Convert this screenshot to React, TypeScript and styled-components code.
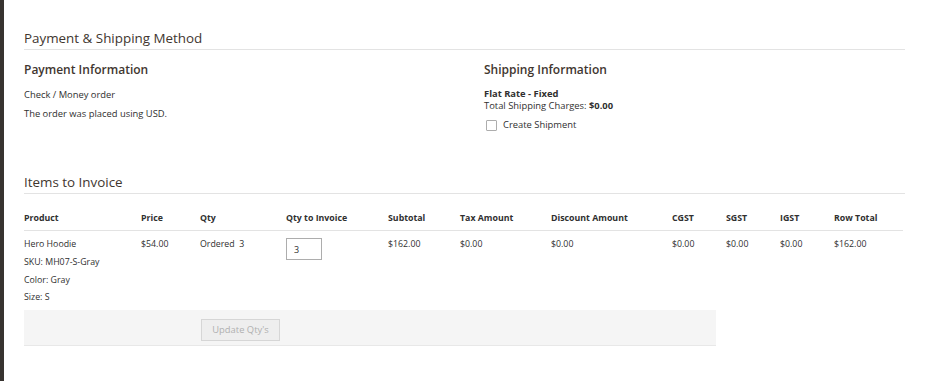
import { createGlobalStyle, styled } from "styled-components";

const GlobalStyle = createGlobalStyle`
  html, body {
    margin: 0;
    padding: 0;
    background: #ffffff;
  }
  body {
    font-family: "Open Sans", "Liberation Sans", sans-serif;
    color: #303030;
  }
`;

const Page = styled.div`
  display: flex;
  width: 925px;
  height: 381px;
  overflow: hidden;
  background: #ffffff;
`;

const SideEdge = styled.div`
  width: 4px;
  flex-shrink: 0;
  background: #373330;
`;

const Main = styled.main`
  flex: 1;
  padding: 30px 20px 0 20px;
`;

const SectionTitle = styled.h2<{ $top?: number }>`
  margin: ${(p) => p.$top ?? 0}px 0 0 0;
  padding-bottom: 2px;
  border-bottom: 1px solid #e3e3e3;
  font-size: 13.4px;
  line-height: 17px;
  font-weight: 400;
  color: #41362f;
`;

const Columns = styled.div`
  display: grid;
  grid-template-columns: 460px 1fr;
  margin-top: 12px;
`;

const Column = styled.div``;

const BlockTitle = styled.h3<{ $gap?: number }>`
  margin: 0 0 ${(p) => p.$gap ?? 8}px 0;
  font-size: 12px;
  line-height: 15px;
  font-weight: 600;
  color: #41362f;
`;

const InfoLine = styled.div<{ $lh?: number }>`
  font-size: 9.4px;
  line-height: ${(p) => p.$lh ?? 19}px;
  strong {
    font-weight: 700;
  }
`;

const CheckRow = styled.label`
  display: flex;
  align-items: center;
  gap: 6px;
  margin-top: 7px;
  margin-left: 2px;
  font-size: 9.4px;
  line-height: 12px;
`;

const CheckBox = styled.span`
  width: 9px;
  height: 9px;
  border: 1px solid #adadad;
  border-radius: 1px;
  background: #fff;
`;

const Table = styled.table`
  width: 879px;
  table-layout: fixed;
  border-collapse: collapse;
  font-size: 8.8px;
`;

const Th = styled.th`
  text-align: left;
  font-weight: 700;
  line-height: 12px;
  padding: 18px 0 6px 0;
  border-bottom: 1px solid #e3e3e3;
  color: #303030;
`;

const Td = styled.td`
  vertical-align: top;
  padding: 4px 0 0 0;
  line-height: 18px;
`;

const ProductLine = styled.div<{ $lh?: number }>`
  line-height: ${(p) => p.$lh ?? 18}px;
`;

const QtyInput = styled.input`
  box-sizing: border-box;
  width: 36px;
  height: 22px;
  margin-top: 3px;
  padding: 0 7px;
  border: 1px solid #adadad;
  font-family: "Open Sans", "Liberation Sans", sans-serif;
  font-size: 9px;
  color: #303030;
  outline: none;
`;

const Footer = styled.div`
  box-sizing: border-box;
  width: 692px;
  height: 36px;
  margin-top: 5px;
  padding: 6px 0 0 177px;
  background: #f5f5f5;
  border-bottom: 1px solid #e8e8e8;
`;

const UpdateButton = styled.button`
  box-sizing: border-box;
  height: 22px;
  width: 79px;
  padding: 0;
  border: 1px solid #d6d6d6;
  background: #eeeeee;
  color: #b0b0b0;
  font-family: "Open Sans", "Liberation Sans", sans-serif;
  font-size: 9.4px;
  cursor: not-allowed;
`;

const columns = [
  { label: "Product", width: 117 },
  { label: "Price", width: 59 },
  { label: "Qty", width: 86 },
  { label: "Qty to Invoice", width: 102 },
  { label: "Subtotal", width: 72 },
  { label: "Tax Amount", width: 91 },
  { label: "Discount Amount", width: 121 },
  { label: "CGST", width: 54 },
  { label: "SGST", width: 54 },
  { label: "IGST", width: 54 },
  { label: "Row Total", width: 69 },
];

export default function App() {
  return (
    <>
      <GlobalStyle />
      <Page>
        <SideEdge />
        <Main>
          <SectionTitle>Payment &amp; Shipping Method</SectionTitle>
          <Columns>
            <Column>
              <BlockTitle>Payment Information</BlockTitle>
              <InfoLine>Check / Money order</InfoLine>
              <InfoLine>The order was placed using USD.</InfoLine>
            </Column>
            <Column>
              <BlockTitle $gap={11}>Shipping Information</BlockTitle>
              <InfoLine $lh={12}>
                <strong>Flat Rate - Fixed</strong>
              </InfoLine>
              <InfoLine $lh={12}>
                Total Shipping Charges: <strong>$0.00</strong>
              </InfoLine>
              <CheckRow>
                <CheckBox />
                Create Shipment
              </CheckRow>
            </Column>
          </Columns>

          <SectionTitle $top={43}>Items to Invoice</SectionTitle>
          <Table>
            <colgroup>
              {columns.map((c) => (
                <col key={c.label} style={{ width: c.width }} />
              ))}
            </colgroup>
            <thead>
              <tr>
                {columns.map((c) => (
                  <Th key={c.label}>{c.label}</Th>
                ))}
              </tr>
            </thead>
            <tbody>
              <tr>
                <Td>
                  <ProductLine>Hero Hoodie</ProductLine>
                  <ProductLine>SKU: MH07-S-Gray</ProductLine>
                  <ProductLine>Color: Gray</ProductLine>
                  <ProductLine $lh={16}>Size: S</ProductLine>
                </Td>
                <Td>$54.00</Td>
                <Td>Ordered&nbsp; 3</Td>
                <Td>
                  <QtyInput defaultValue="3" />
                </Td>
                <Td>$162.00</Td>
                <Td>$0.00</Td>
                <Td>$0.00</Td>
                <Td>$0.00</Td>
                <Td>$0.00</Td>
                <Td>$0.00</Td>
                <Td>$162.00</Td>
              </tr>
            </tbody>
          </Table>
          <Footer>
            <UpdateButton disabled>Update Qty's</UpdateButton>
          </Footer>
        </Main>
      </Page>
    </>
  );
}
